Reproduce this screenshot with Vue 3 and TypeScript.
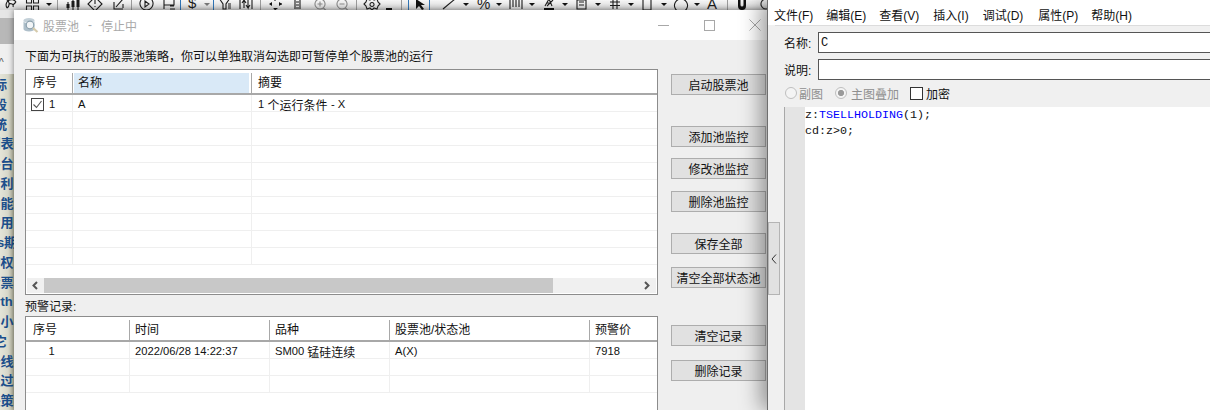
<script setup lang="ts">
interface Btn { label: string; gap: number }

const sideLabels = ['指标', '分段', '系统', '序列表', '云平台', '盈亏利', '多功能', '通常用', '股指s期', '认购权', '选股票', 'Worth', '大中小', '其它', '趋势线', '已通过', '新决策']

const poolRows = Array.from({ length: 10 }, (_, i) => i)
const logRows = Array.from({ length: 3 }, (_, i) => i)

const buttons: Btn[] = [
  { label: '启动股票池', gap: 34 },
  { label: '添加池监控', gap: 31 },
  { label: '修改池监控', gap: 11 },
  { label: '删除池监控', gap: 12 },
  { label: '保存全部', gap: 21 },
  { label: '清空全部状态池', gap: 13 },
  { label: '清空记录', gap: 37 },
  { label: '删除记录', gap: 14 },
]

const menus = [
  { label: '文件(F)', gap: 0 },
  { label: '编辑(E)', gap: 13 },
  { label: '查看(V)', gap: 13 },
  { label: '插入(I)', gap: 14 },
  { label: '调试(D)', gap: 14 },
  { label: '属性(P)', gap: 15 },
  { label: '帮助(H)', gap: 13 },
]

const seps = [57, 131, 260, 356, 401, 727]
const blueSeps = [180, 213, 408, 429]
const drops = [49, 207, 466, 499, 532, 565, 598, 631, 664, 697]

// everything in the toolbar is cut off at the bottom by the dialog
const icons = [
  'M7 8a5 5 0 0 1 9-6M16 2l-3 3M5 -1a5 5 0 0 1 2 9M9 4c2-1 5 0 4 3',
  'M26.500 -2h5v5h-5zM33.500 -2h5v5h-5zM26.500 6h5v5h-5zM33.500 6h5v5h-5z',
  'M68 2v8M73 -1v11M78 0v10',
  'M95 -3l7 7-7 7-7-7zM95 0v4M95 6v1',
  'M114 2v7h9M116 7l7-8M123 4v4',
  'M146.500 -3a6.500 6.500 0 1 0 .01 0zM145 1v6l4-3z',
  'M164 -1h10v6h-10zM164 -1v10M164 5h7M170 9h5M170 6h4',
  'M219 -2l4 6v5h3V4l4-6M228 4h3M228 6h3M228 8h3',
  'M240 -2v11M252 -2v11M244 8v-8l-2 3M244 0l2 3M248 0v8l-2-3M248 8l2-3',
  'M295 -2v11M300 -2v11M296 2h3M296 5h3M296 8h3',
  'M443 9l12-10',
  'M510 0v9M513 0v7M516 0v7M519 0v7M522 0v9',
  'M545 6l4-7 3 7M547 3h4M553 0l-6 6',
  'M577 0h9v9h-9zM579 2h5M579 5h5',
  'M610 2h10M610 5.500h10M613 -1v10M617 -1v10',
  'M643 -1h8v11h-8z',
  'M681 -1a6.500 6.500 0 1 0 .01 0',
]

const greyIcons = [
  'M320 -1a5 5 0 1 0 .01 0M317.500 4h5M320 1.500v5M323.500 8l3 3',
  'M342 -1a5 5 0 1 0 .01 0M339.500 4h5M345.500 8l3 3',
]

const gear = 'M372 -2l2 2 3 -1 1 3 2 2-2 2-1 3-3-1-2 2-2-2-3 1-1-3-2-2 2-2 1-3 3 1zM372 2.500a2 2 0 1 0 .01 0'
</script>

<template>
  <div class="desk">
    <svg class="toolbar" width="1210" height="10" viewBox="0 0 1210 10">
      <path v-for="x in seps" :key="'s' + x" :d="`M${x + 0.5} 0v10`" stroke="#9a9a9a" />
      <path v-for="x in blueSeps" :key="'b' + x" :d="`M${x + 0.5} 0v10`" stroke="#2f74b5" />
      <path v-for="d in icons" :key="d" :d="d" fill="none" stroke="#1c1c1c" stroke-width="1.100" />
      <path v-for="d in greyIcons" :key="d" :d="d" fill="none" stroke="#8a8a8a" stroke-width="1.100" />
      <path :d="gear" fill="none" stroke="#222" stroke-width="1.100" />
      <path v-for="x in drops" :key="'d' + x" :d="`M${x - 3} 3h6l-3 3z`" :fill="x === 207 ? '#777' : '#111'" />
      <path d="M66.500 4h3v4h-3zM71.500 1h3v6h-3zM76.500 0h3v7h-3z" fill="#1c1c1c" />
      <path d="M275 -1v2M275 8v2M270 4h2M279 4h3" stroke="#111" />
      <path d="M272 2v4l-3-2zM279 2v4l3-2zM273 8h5l-2.500 2z" fill="#111" />
      <path d="M386 8h6v2h-6z" fill="#111" />
      <path d="M416 -1v10l3-3 3 4 2-1-3-4h4z" fill="#111" />
      <path d="M544 8h10v2h-10z" fill="#111" />
      <path d="M738 -2h2.500v7a1 1 0 0 0 3 0v-7h2.500v8a4 4 0 0 1-8 0z" fill="#111" />
      <path d="M766 -1a5 5 0 1 0 .01 0" fill="none" stroke="#333" stroke-width="1.200" />
      <text x="188" y="8" class="tb-text">$</text>
      <text x="477" y="9" class="tb-text">%</text>
      <text x="707" y="9" class="tb-text">A</text>
    </svg>

    <aside class="side">
      <div class="side-top"></div>
      <div class="side-tab"><span>^</span></div>
      <ul class="side-list">
        <li v-for="t in sideLabels" :key="t"><span>{{ t }}</span></li>
      </ul>
    </aside>

    <section class="dialog">
      <header class="title">
        <svg class="title-icon" width="17" height="17" viewBox="0 0 17 17">
          <ellipse cx="7" cy="3.500" rx="5.500" ry="2.500" fill="#c3d0d8" />
          <path d="M1.500 4v8c0 1.500 2.500 2.500 5.500 2.500s5.500-1 5.500-2.500V4c0 1.500-2.500 2.500-5.500 2.500S1.500 5.500 1.500 4z" fill="#aebfca" />
          <circle cx="8" cy="8" r="3.800" fill="#f2f5f7" stroke="#8ba0ad" stroke-width="1.200" />
          <path d="M11 11l4.500 4" stroke="#d6cbac" stroke-width="2.200" />
        </svg>
        <span class="title-name">股票池</span>
        <span class="title-dash">-</span>
        <span class="title-state">停止中</span>
        <div class="caption">
          <div class="cap-btn"><i class="cap-min"></i></div>
          <div class="cap-btn"><i class="cap-max"></i></div>
          <div class="cap-btn">
            <svg width="12" height="12" viewBox="0 0 12 12"><path d="M.5.5l11 11M11.500.5l-11 11" stroke="#a8a8a8" fill="none" /></svg>
          </div>
        </div>
      </header>

      <div class="dialog-body">
        <div class="main-col">
          <p class="hint">下面为可执行的股票池策略，你可以单独取消勾选即可暂停单个股票池的运行</p>

          <div class="table pool">
            <div class="thead">
              <div class="th c-no">序号</div>
              <div class="th c-name"><span class="hot">名称</span></div>
              <div class="th c-sum">摘要</div>
            </div>
            <div class="tbody">
              <div v-for="r in poolRows" :key="r" class="tr">
                <div class="td c-no">
                  <template v-if="r === 0">
                    <svg class="check" width="13" height="13" viewBox="0 0 13 13">
                      <rect x=".5" y=".5" width="12" height="12" fill="#fff" stroke="#444" />
                      <path d="M2.500 6.500l3 3 5-6.500" fill="none" stroke="#555" stroke-width="1.100" />
                    </svg>
                    <span class="num">1</span>
                  </template>
                </div>
                <div class="td c-name"><span v-if="r === 0" class="num">A</span></div>
                <div class="td c-sum">
                  <template v-if="r === 0"><span class="num">1</span>&nbsp;个运行条件&nbsp;<span class="num">- X</span></template>
                </div>
              </div>
            </div>
            <div class="hscroll">
              <svg width="17" height="15" viewBox="0 0 17 15"><path d="M10 4L6.500 7.500 10 11" fill="none" stroke="#555" stroke-width="2" /></svg>
              <div class="thumb"></div>
              <svg class="arrow-r" width="18" height="15" viewBox="0 0 18 15"><path d="M7 4l3.500 3.500L7 11" fill="none" stroke="#555" stroke-width="2" /></svg>
            </div>
          </div>

          <p class="hint log-label">预警记录:</p>

          <div class="table log">
            <div class="thead">
              <div class="th l-no">序号</div>
              <div class="th l-time">时间</div>
              <div class="th l-kind">品种</div>
              <div class="th l-pool">股票池/状态池</div>
              <div class="th l-price">预警价</div>
            </div>
            <div class="tbody">
              <div v-for="r in logRows" :key="r" class="tr">
                <div class="td l-no center"><span v-if="r === 0" class="num">1</span></div>
                <div class="td l-time num">{{ r === 0 ? '2022/06/28 14:22:37' : '' }}</div>
                <div class="td l-kind"><template v-if="r === 0"><span class="num">SM00</span> 锰硅连续</template></div>
                <div class="td l-pool num">{{ r === 0 ? 'A(X)' : '' }}</div>
                <div class="td l-price num">{{ r === 0 ? '7918' : '' }}</div>
              </div>
            </div>
          </div>
        </div>

        <div class="actions">
          <button
            v-for="b in buttons"
            :key="b.label"
            class="act"
            :style="{ marginTop: b.gap + 'px' }"
          >{{ b.label }}</button>
        </div>
      </div>
    </section>

    <section class="editor">
      <nav class="menubar">
        <span v-for="m in menus" :key="m.label" :style="{ marginLeft: m.gap + 'px' }">{{ m.label }}</span>
      </nav>
      <div class="editor-body">
        <div class="strip">
          <button class="collapse">
            <svg width="6" height="10" viewBox="0 0 6 10"><path d="M5 .5L1 5l4 4.500" fill="none" stroke="#333" /></svg>
          </button>
        </div>
        <div class="form">
          <label class="field"><span>名称:</span><input class="text-input" value="C" /></label>
          <label class="field"><span>说明:</span><input class="text-input" value="" /></label>
          <div class="opts">
            <span class="radio"></span><span class="off o1">副图</span>
            <span class="radio on"></span><span class="off o2">主图叠加</span>
            <span class="box"></span><span class="o3">加密</span>
          </div>
          <div class="code-wrap">
            <div class="gutter"></div>
            <pre class="code"><span>z:</span><span class="kw">TSELLHOLDING</span><span>(1);</span>
cd:z&gt;0;</pre>
          </div>
        </div>
      </div>
    </section>
  </div>
</template>

<style>
html, body { margin: 0; background: #fff; }
</style>

<style scoped>
.desk {
  position: relative;
  width: 1210px;
  height: 410px;
  overflow: hidden;
  background: #f0f0f0;
  font-family: "Liberation Sans", "Noto Sans CJK SC", sans-serif;
  font-size: 12px;
  color: #111;
}

.toolbar {
  display: block;
  background: linear-gradient(#f6f6f6, #d6d6d6);
}
.tb-text {
  font-family: "Liberation Sans", sans-serif;
  font-size: 15px;
  fill: #1c1c1c;
}

.side {
  width: 14px;
  height: 400px;
  display: flex;
  flex-direction: column;
}
.side-top { height: 34px; background: linear-gradient(#e6e6e6 0 8px, #b8b8b8 8px); }
.side-tab {
  height: 30px;
  background: #f0f0f0;
  position: relative;
  overflow: hidden;
}
.side-tab span { position: absolute; left: -1px; top: 13px; font-size: 10px; color: #555; }
.side-list {
  flex: 1;
  margin: 0;
  padding: 1px 0 0;
  list-style: none;
  overflow: hidden;
  background: linear-gradient(90deg, #e4e4d8, #d8d8ca 60%, #b9b9a3);
}
.side-list li {
  height: 19.750px;
  line-height: 20px;
  width: 56px;
  margin-left: -34px;
  text-align: center;
  white-space: nowrap;
  font-size: 13px;
  font-weight: 700;
  color: #1c4f8c;
}

.dialog {
  position: absolute;
  left: 14px;
  top: 10px;
  width: 764px;
  height: 400px;
  display: flex;
  flex-direction: column;
  background: #efefef;
  box-shadow: 0 0 6px rgba(0, 0, 0, .5);
}

.title {
  height: 30px;
  flex: none;
  display: flex;
  align-items: center;
  background: #fff;
  color: #a9a9a9;
}
.title-icon { margin-left: 8px; }
.title-name { margin-left: 4px; }
.title-dash { margin-left: 9px; }
.title-state { margin-left: 9px; }
.caption { margin-left: auto; display: flex; }
.cap-btn {
  width: 46px;
  height: 30px;
  display: flex;
  align-items: center;
  justify-content: center;
}
.cap-min { width: 11px; height: 1px; background: #a8a8a8; }
.cap-max { width: 9px; height: 9px; border: 1px solid #a8a8a8; }

.dialog-body {
  flex: 1;
  display: flex;
  padding-left: 11px;
  min-height: 0;
}

.main-col { width: 633px; flex: none; }

.hint {
  margin: 9px 0 4px;
  height: 16px;
  line-height: 16px;
  white-space: nowrap;
}
.log-label { margin: 4px 0 1px; }

.table {
  box-sizing: border-box;
  border: 1px solid #8c8c8c;
  background: #fff;
}
.pool { height: 226px; display: flex; flex-direction: column; }
.log { height: 120px; }

.thead {
  height: 25px;
  box-sizing: border-box;
  display: flex;
  align-items: flex-start;
  padding-top: 3px;
  border-bottom: 2px solid #a8a8a8;
}
.th {
  box-sizing: border-box;
  height: 20px;
  line-height: 20px;
  padding-left: 5px;
  border-right: 1px solid #a8a8a8;
  white-space: nowrap;
}
.th:last-child { border-right: 0; }
.th.c-no, .th.l-no { padding-left: 7px; }
.th.c-sum { padding-left: 6px; }
.th.c-name { padding: 0 2px 0 1px; }
.hot {
  display: block;
  height: 20px;
  padding-left: 4px;
  background: #d9e9f7;
}
.tbody { flex: 1; overflow: hidden; }
.tr {
  display: flex;
  height: 17px;
  box-sizing: border-box;
  border-bottom: 1px solid #efefef;
}
.td {
  box-sizing: border-box;
  height: 16px;
  padding: 2px 0 0 5px;
  border-right: 1px solid #efefef;
  white-space: nowrap;
  display: flex;
  align-items: center;
}
.td:last-child { border-right: 0; }
.center { justify-content: center; padding: 2px 52px 0 0; }

.c-no { width: 47px; flex: none; }
.c-name { width: 179px; flex: none; }
.c-sum { flex: 1; padding-left: 6px; }
.check { margin-right: 5px; }

.l-no { width: 104px; flex: none; }
.l-time { width: 140px; flex: none; }
.l-kind { width: 120px; flex: none; }
.l-pool { width: 200px; flex: none; }
.l-price { flex: 1; }
.td.l-kind span { margin-right: 3px; }

.num { font-size: 11.200px; }

.hscroll {
  height: 15px;
  flex: none;
  display: flex;
  margin: 0 1px 1px;
  background: #f0f0f0;
}
.thumb { width: 509px; background: #c8c8c8; }
.arrow-r { margin-left: auto; }

.actions {
  margin-left: 13px;
  display: flex;
  flex-direction: column;
  align-items: flex-start;
}
.act {
  width: 95px;
  height: 21px;
  padding: 0;
  flex: none;
  background: #e1e1e1;
  border: 1px solid #adadad;
  font: inherit;
  color: #111;
  white-space: nowrap;
}

.editor {
  position: absolute;
  left: 767px;
  top: 0;
  width: 443px;
  height: 410px;
  box-sizing: border-box;
  border-left: 1px solid #6e6e6e;
  display: flex;
  flex-direction: column;
  background: #f0f0f0;
  box-shadow: -6px 0 20px rgba(0, 0, 0, .4);
}
.menubar {
  height: 25px;
  flex: none;
  box-sizing: border-box;
  padding: 8px 0 0 6px;
  display: flex;
  line-height: 17px;
  background: #fff;
  white-space: nowrap;
}
.editor-body { flex: 1; display: flex; min-height: 0; border-top: 1px solid #dcdcdc; margin-left: 7px; }
.strip { flex: none; margin-left: -7px; width: 16px; }
.collapse {
  display: flex;
  align-items: center;
  justify-content: center;
  width: 12px;
  height: 73px;
  margin-top: 196px;
  padding: 0;
  background: #e1e1e1;
  border: 1px solid #b4b4b4;
}
.form { flex: 1; min-width: 0; display: flex; flex-direction: column; padding-top: 6px; }
.field {
  height: 21px;
  margin-bottom: 6px;
  display: flex;
  align-items: center;
  margin-right: -4px;
}
.field span { width: 34px; flex: none; }
.text-input {
  flex: 1;
  min-width: 0;
  box-sizing: border-box;
  height: 21px;
  padding: 0 2px;
  border: 1px solid #555;
  background: #fff;
  outline: 0;
  font-family: "Liberation Mono", monospace;
  font-size: 12px;
  color: #111;
}
.opts {
  height: 16px;
  margin-top: -1px;
  margin-bottom: 6px;
  display: flex;
  align-items: center;
}
.radio {
  box-sizing: border-box;
  width: 12px;
  height: 12px;
  margin-left: 1px;
  border: 1px solid #bfbfbf;
  border-radius: 50%;
  background: #f4f4f4;
}
.radio.on { background: radial-gradient(circle, #9a9a9a 0 2.800px, #f4f4f4 3.300px); margin-left: 12px; }
.off { color: #8f8f8f; }
.o1 { margin-left: 2px; }
.o2 { margin-left: 4px; }
.box {
  box-sizing: border-box;
  width: 13px;
  height: 13px;
  margin-left: 11px;
  border: 1px solid #333;
  background: #fff;
}
.o3 { margin-left: 3px; }
.code-wrap {
  flex: 1;
  display: flex;
  border-left: 1px solid #a8a8a8;
  background: #fff;
  min-height: 0;
}
.gutter { width: 20px; flex: none; background: #e4e4e4; }
.code {
  margin: 0;
  padding-top: 1px;
  font-family: "Liberation Mono", monospace;
  font-size: 11.670px;
  line-height: 15.500px;
  color: #111;
}
.kw { color: #0000ff; }
</style>
